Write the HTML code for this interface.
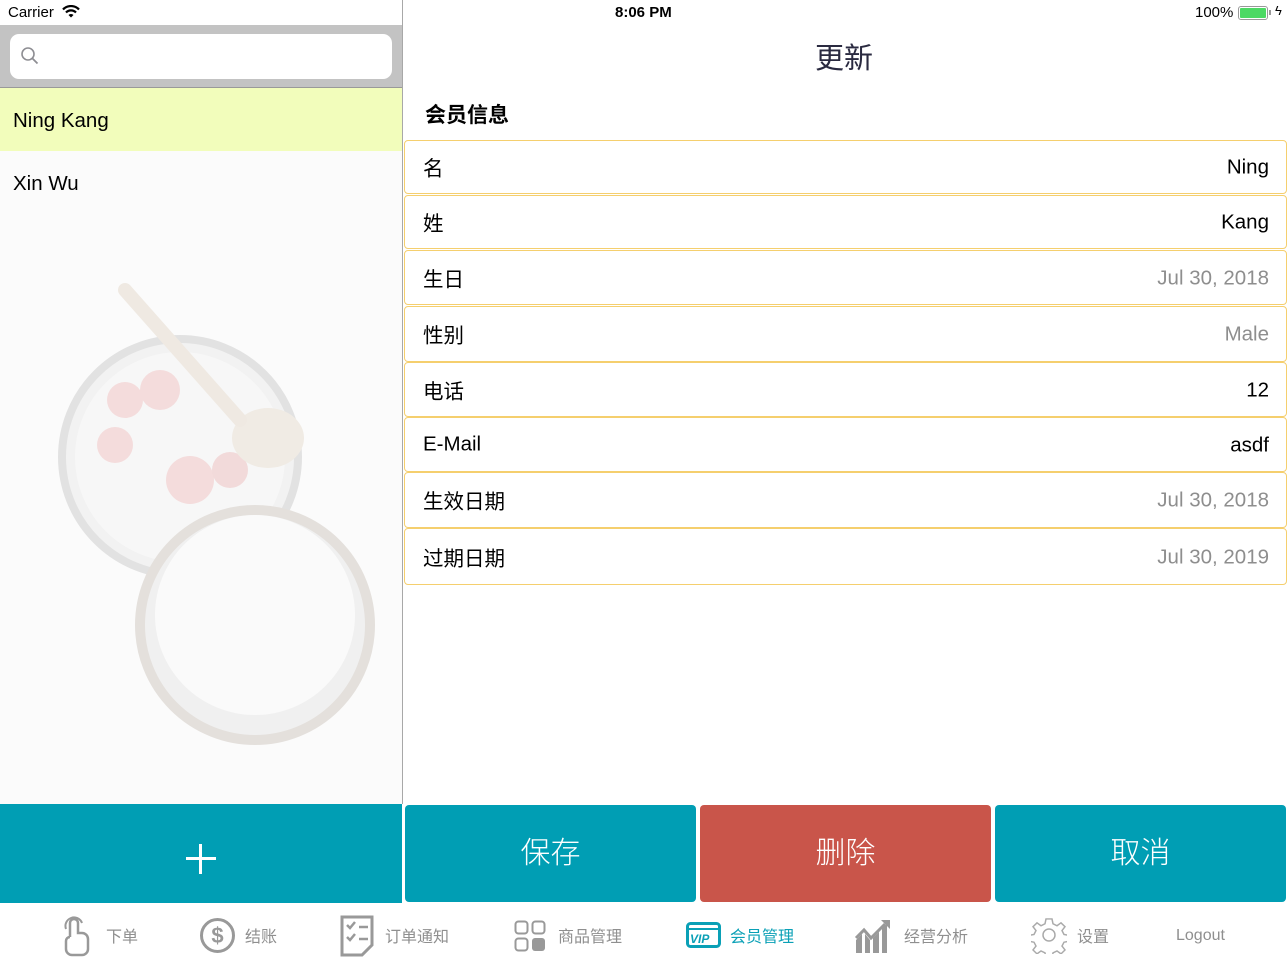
<!DOCTYPE html>
<html><head><meta charset="utf-8"><style>
*{margin:0;padding:0;box-sizing:border-box}
body{width:1288px;height:966px;position:relative;overflow:hidden;background:#fff;font-family:"Liberation Sans","Noto Sans CJK SC",sans-serif;color:#000}
.abs{position:absolute}
.row{position:absolute;left:404px;width:883px;border:1px solid #f5cf6e;border-radius:4px;background:#fff;font-size:20.5px}
.row .l{position:absolute;left:18px;top:50%;transform:translateY(-52%)}
.row .r{position:absolute;right:17px;top:50%;transform:translateY(-48%)}
.g{color:#8e8e8e}
.btn{position:absolute;top:805px;height:97px;width:291px;border-radius:4px;color:#fff;font-size:30px;text-align:center;line-height:97px;font-weight:300}
.tab{position:absolute;top:923px;font-size:16px;color:#8f8f8f}
</style></head><body>
<!-- left panel -->
<div class="abs" style="left:0;top:0;width:402px;height:804px;background:#fbfbfb"></div>
<div class="abs" style="left:0;top:0;width:402px;height:25px;background:#fff"></div>
<div class="abs" style="left:8px;top:4px;font-size:15px">Carrier</div>
<svg class="abs" style="left:62px;top:5px" width="18" height="13" viewBox="0 0 18 13"><path d="M1 4.5a11 11 0 0 1 16 0" stroke="#000" stroke-width="2.2" fill="none"/><path d="M4 7.5a7 7 0 0 1 10 0" stroke="#000" stroke-width="2.2" fill="none"/><path d="M9 12.5l-2.5-2.5a3.5 3.5 0 0 1 5 0z" fill="#000"/></svg>
<div class="abs" style="left:0;top:25px;width:402px;height:62px;background:#c3c3c3"></div>
<div class="abs" style="left:10px;top:34px;width:382px;height:45px;background:#fff;border-radius:9px"></div>
<svg class="abs" style="left:20px;top:46px" width="20" height="20" viewBox="0 0 20 20"><circle cx="8" cy="8" r="6" stroke="#8e8e93" stroke-width="1.6" fill="none"/><path d="M12.5 12.5l5 5" stroke="#8e8e93" stroke-width="1.8"/></svg>
<div class="abs" style="left:0;top:87px;width:402px;height:1px;background:#999"></div>
<div class="abs" style="left:0;top:88px;width:402px;height:63px;background:#f2fdbb"></div>
<div class="abs" style="left:13px;top:109px;font-size:20.5px">Ning Kang</div>
<div class="abs" style="left:13px;top:172px;font-size:20.5px">Xin Wu</div>
<!-- faint coconut image -->
<svg class="abs" style="left:30px;top:270px" width="360" height="480" viewBox="0 0 360 480">
<circle cx="150" cy="187" r="118" fill="#f2f2f2" stroke="#e2e2e2" stroke-width="8"/>
<circle cx="150" cy="187" r="105" fill="#f7f7f7"/>
<circle cx="225" cy="355" r="115" fill="#f0f0f0" stroke="#e4e0dc" stroke-width="10"/>
<circle cx="225" cy="345" r="100" fill="#fafafa"/>
<circle cx="130" cy="120" r="20" fill="#f4dcdc"/><circle cx="95" cy="130" r="18" fill="#f4dcdc"/>
<circle cx="160" cy="210" r="24" fill="#f4dcdc"/><circle cx="85" cy="175" r="18" fill="#f4dcdc"/><circle cx="200" cy="200" r="18" fill="#f2dada"/>
<ellipse cx="238" cy="168" rx="36" ry="30" fill="#f0ebe4"/>
<path d="M95 20L210 150" stroke="#efe9e2" stroke-width="14" stroke-linecap="round"/>
</svg>
<div class="abs" style="left:402px;top:0;width:1px;height:804px;background:#a8a8a8"></div>
<div class="abs" style="left:0;top:804px;width:402px;height:99px;background:#009eb4"></div>
<div class="abs" style="left:186px;top:857px;width:30px;height:3px;background:#fff"></div>
<div class="abs" style="left:199px;top:844px;width:3px;height:30px;background:#fff"></div>
<!-- right -->
<div class="abs" style="left:615px;top:4px;font-size:15px;font-weight:bold">8:06 PM</div>
<div class="abs" style="left:1195px;top:4px;font-size:15px">100%</div>
<div class="abs" style="left:1238px;top:6px;width:30px;height:14px;border:1px solid #999;border-radius:3px;padding:1px"><div style="width:100%;height:100%;background:#4cd964;border-radius:1px"></div></div>
<div class="abs" style="left:1269px;top:10px;width:2px;height:5px;background:#999"></div>
<div class="abs" style="left:1275px;top:3px;font-size:13px">ϟ</div>
<div class="abs" style="left:815px;top:35px;font-size:29px;color:#2a2a40">更新</div>
<div class="abs" style="left:425px;top:99px;font-size:21px;font-weight:bold">会员信息</div>
<div class="row" style="top:140px;height:54px"><span class="l">名</span><span class="r">Ning</span></div>
<div class="row" style="top:195px;height:54px"><span class="l">姓</span><span class="r">Kang</span></div>
<div class="row" style="top:250px;height:55px"><span class="l">生日</span><span class="r g">Jul 30, 2018</span></div>
<div class="row" style="top:306px;height:56px"><span class="l">性别</span><span class="r g">Male</span></div>
<div class="row" style="top:362px;height:55px"><span class="l">电话</span><span class="r">12</span></div>
<div class="row" style="top:417px;height:55px"><span class="l">E-Mail</span><span class="r">asdf</span></div>
<div class="row" style="top:472px;height:56px"><span class="l">生效日期</span><span class="r g">Jul 30, 2018</span></div>
<div class="row" style="top:528px;height:57px"><span class="l">过期日期</span><span class="r g">Jul 30, 2019</span></div>
<div class="btn" style="left:405px;background:#009eb4">保存</div>
<div class="btn" style="left:700px;background:#c9554a">删除</div>
<div class="btn" style="left:995px;background:#009eb4">取消</div>
<!-- tab bar -->
<svg class="abs" style="left:62px;top:915px" width="30" height="42" viewBox="0 0 30 42"><path d="M8 22V8a4 4 0 0 1 8 0v10h4a6 6 0 0 1 6 6v10a6 6 0 0 1-6 6H10a6 6 0 0 1-6-6v-8a4 4 0 0 1 4-4" stroke="#999" stroke-width="2.5" fill="none"/><path d="M4 14a8 8 0 0 1 16-6" stroke="#999" stroke-width="2" fill="none"/></svg>
<div class="tab" style="left:106px">下单</div>
<svg class="abs" style="left:199px;top:917px" width="37" height="37" viewBox="0 0 37 37"><circle cx="18.5" cy="18.5" r="16" stroke="#999" stroke-width="3" fill="none"/><text x="18.5" y="26" text-anchor="middle" font-size="22" font-weight="bold" fill="#999" font-family="Liberation Sans">$</text></svg>
<div class="tab" style="left:245px">结账</div>
<svg class="abs" style="left:340px;top:915px" width="34" height="42" viewBox="0 0 34 42"><path d="M2 2h30v28l-10 10H2z" stroke="#999" stroke-width="3" fill="none"/><path d="M7 10l3 3 5-6M7 22l3 3 5-6M19 12h9M19 24h9" stroke="#999" stroke-width="2.5" fill="none"/></svg>
<div class="tab" style="left:385px">订单通知</div>
<svg class="abs" style="left:514px;top:920px" width="32" height="32" viewBox="0 0 32 32"><rect x="1.5" y="1.5" width="12" height="12" rx="3" stroke="#999" stroke-width="2" fill="none"/><rect x="18.5" y="1.5" width="12" height="12" rx="3" stroke="#999" stroke-width="2" fill="none"/><rect x="1.5" y="18.5" width="12" height="12" rx="3" stroke="#999" stroke-width="2" fill="none"/><rect x="18" y="18" width="13" height="13" rx="3" fill="#999"/></svg>
<div class="tab" style="left:558px">商品管理</div>
<svg class="abs" style="left:686px;top:922px" width="35" height="26" viewBox="0 0 35 26"><rect x="1.5" y="1.5" width="32" height="23" rx="3" stroke="#0aa0b6" stroke-width="3" fill="none"/><path d="M1.5 7h32" stroke="#0aa0b6" stroke-width="2"/><text x="4" y="21" font-size="12" font-style="italic" font-weight="bold" fill="#0aa0b6" font-family="Liberation Sans">VIP</text></svg>
<div class="tab" style="left:730px;color:#0aa0b6">会员管理</div>
<svg class="abs" style="left:854px;top:918px" width="42" height="35" viewBox="0 0 42 35"><path d="M2 35V22l6-6v19zM11 35V16l5 6v13zM19 35V20l6-6v21zM28 35V10l5-4v29z" fill="#999"/><path d="M2 20l8-8 7 8 14-14" stroke="#999" stroke-width="3" fill="none"/><path d="M27 2h9v9z" fill="#999"/></svg>
<div class="tab" style="left:904px">经营分析</div>
<svg class="abs" style="left:1031px;top:917px" width="36" height="37" viewBox="0 0 36 37"><path d="M15 2h6l1 5 4 2 4-3 4 4-3 4 2 4 5 1v6l-5 1-2 4 3 4-4 4-4-3-4 2-1 5h-6l-1-5-4-2-4 3-4-4 3-4-2-4-5-1v-6l5-1 2-4-3-4 4-4 4 3 4-2z" stroke="#aaa" stroke-width="1.5" fill="none" transform="scale(1 .97)"/><circle cx="18" cy="18" r="6" stroke="#aaa" stroke-width="1.5" fill="none"/></svg>
<div class="tab" style="left:1077px">设置</div>
<div class="tab" style="left:1176px;top:927px">Logout</div>
</body></html>
